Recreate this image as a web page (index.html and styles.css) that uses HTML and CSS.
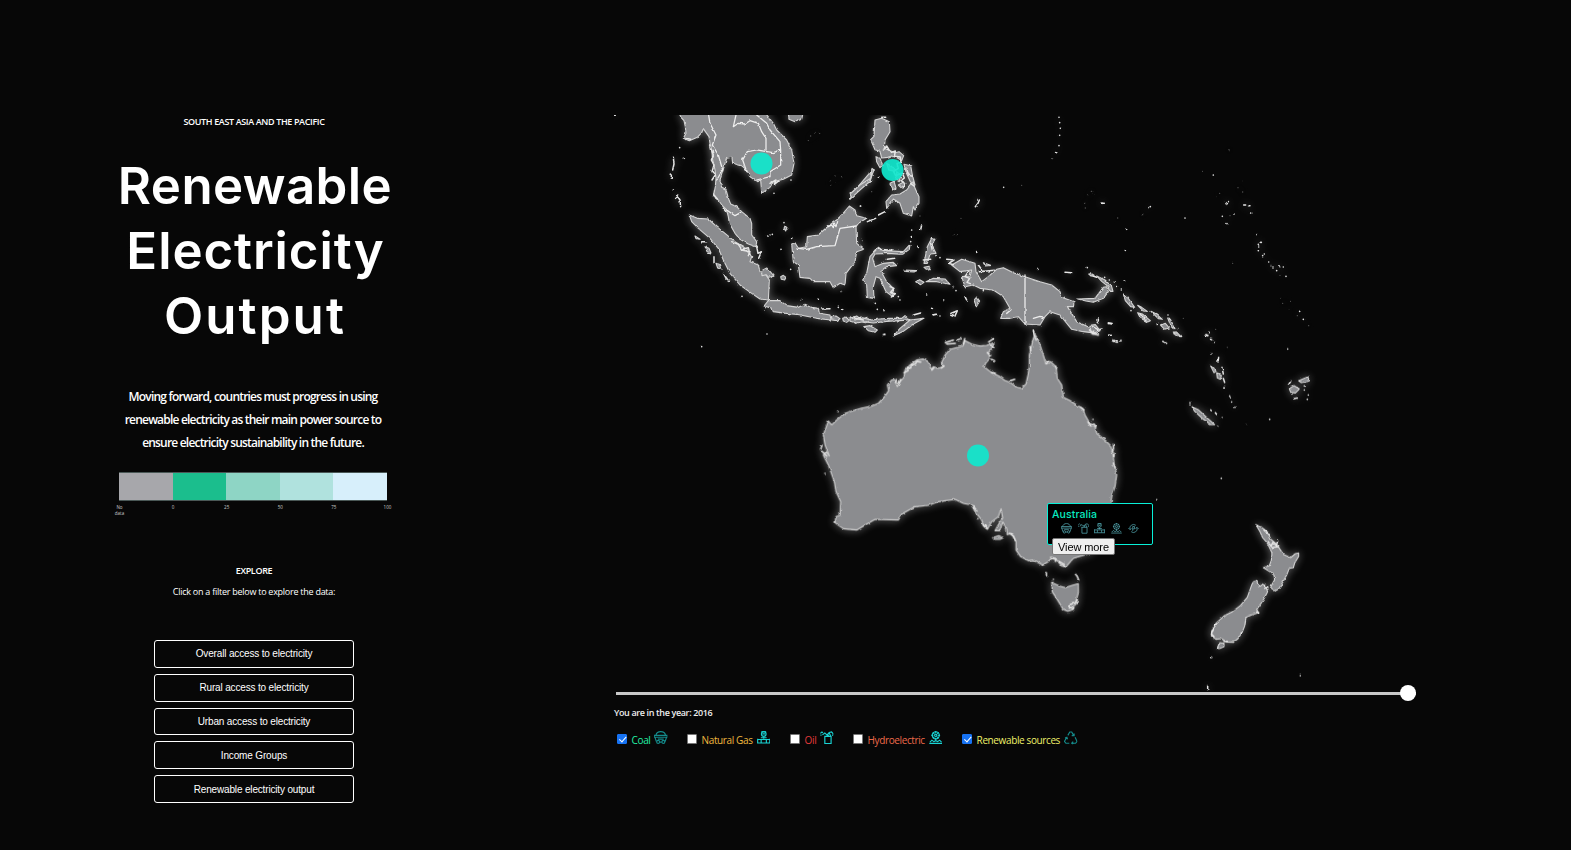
FILE: index.html
```html
<!DOCTYPE html>
<html lang="en">
<head>
<meta charset="utf-8">
<title>Renewable Electricity Output</title>
<link rel="stylesheet" href="styles.css">
</head>
<body>
<svg class="defs" aria-hidden="true">
  <symbol id="coal" viewBox="0 0 14 14"><path d="M2 4.500C2.500 2 4.500.7 7 .7s4.500 1.300 5 3.800M.3 4.500h13.400v2H.3zM1 6.500l1.500 4.500M13 6.500 11.500 11M4 8.500h6M6 11.500h2"/><circle cx="4.300" cy="11.300" r="1.500"/><circle cx="9.700" cy="11.300" r="1.500"/></symbol>
  <symbol id="gas" viewBox="0 0 14 14"><circle cx="7" cy="3" r="2.400"/><path d="M4.500.8h5M5.500 3h3M7 5.500V8M4 7h6M.7 8v5M13.300 8v5M.7 8.800h3.600v3.600H.7M13.300 8.800H9.700v3.600h3.600M4.300 8.800h5.400M4.300 12.400h5.400"/></symbol>
  <symbol id="oil" viewBox="0 0 14 14"><path d="M.3 2.500 2 1l1 1M2.500 4 5 2l2.500 2.500 2-3 2.500-.5 1.700 2-.7 2M4.500 5.500h7M5 5v8h6.500V5M7 3l2 2M9.500 2l1.500 3M1 3.500v1.500"/></symbol>
  <symbol id="hydro" viewBox="0 0 14 14"><circle cx="7" cy="4.500" r="3.700"/><circle cx="7" cy="4.500" r="1.200"/><path d="M7 0v2m0 5v3M2.500 4.500h2m5 0h2M4 1.500l1.500 1.500m3 3L10 7.500M10 1.500 8.500 3M5.500 6 4 7.500M1 11.500l2-2 2 1.500 2-1 2 1 2-1.500 2 2M.3 12.800h13.400"/></symbol>
  <symbol id="recycle" viewBox="0 0 14 14"><path d="M4 4.500 6 1h2l2 3.500M10.500 2.500v2.300H8M11.500 6.500l2 4.200-1.500 2H8m1.500-1.700L8 12.700l1.500 1M5.500 12.700H2L.5 10.700l2.300-4M1 7.200l2-.7.700 2"/></symbol>
  <symbol id="power" viewBox="0 0 14 14"><path d="M2.500 8A4.700 4.700 0 0 1 10 3M11.500 6A4.700 4.700 0 0 1 4 11M.5 6.500 2.500 8.500l2-1.500M9.500 7l2-1.500 2 2M6 10V4.500h2.300v3H6"/></symbol>
</svg>

<main class="page">
  <section class="intro">
    <p class="region">SOUTH EAST ASIA AND THE PACIFIC</p>
    <h1 class="title"><span class="line-a">Renewable</span><span class="line-b">Electricity</span><span class="line-c">Output</span></h1>
    <p class="lead">Moving forward, countries must progress in using<br>renewable electricity as their main power source to<br>ensure electricity sustainability in the future.</p>
    <div class="scale"><i class="s0"></i><i class="s1"></i><i class="s2"></i><i class="s3"></i><i class="s4"></i></div>
    <div class="ticks"><span>No<br>data</span><span>0</span><span>25</span><span>50</span><span>75</span><span>100</span></div>
    <h2 class="explore">EXPLORE</h2>
    <p class="hint">Click on a filter below to explore the data:</p>
    <nav class="filters">
      <button>Overall access to electricity</button>
      <button>Rural access to electricity</button>
      <button>Urban access to electricity</button>
      <button>Income Groups</button>
      <button>Renewable electricity output</button>
    </nav>
  </section>

  <section class="viz">
    <div class="map">
      <svg class="map-svg" viewBox="614 115 803 576">
        <defs>
          <filter id="coast" filterUnits="userSpaceOnUse" x="600" y="100" width="830" height="600" color-interpolation-filters="sRGB">
            <feTurbulence type="fractalNoise" baseFrequency=".25" numOctaves="1" seed="4" result="n"/>
            <feDisplacementMap in="SourceGraphic" in2="n" scale="3" xChannelSelector="R" yChannelSelector="G" result="d"/>
            <feGaussianBlur in="d" stdDeviation="4" result="b"/>
            <feComponentTransfer in="b" result="g"><feFuncA type="linear" slope=".6"/></feComponentTransfer>
            <feMerge><feMergeNode in="g"/><feMergeNode in="d"/></feMerge>
          </filter>
        </defs>
        <g class="land" filter="url(#coast)">
          <!-- mainland and western islands -->
          <g transform="translate(610 100) scale(.33333)">
            <path d="M207 40l6 12 9 10 4 18 2 20-8 15 18 7 24-10 13-14 5-12 10 14 7 10 3 20 5 20 3 30 7 30 3 25-2 25-6 30 15 10 13 18 12 12 5 20 3 20 17 30 15 18 25 14 23 8 2-15-15-20v-35l-5-15-25-20-15-15-18-8-7-17-7-27-13-6-5-22 8-25 7-25 5-15 16-3 2 18 27 7 15 13 10 20 20 15 12-5 3 40 25-18 10-17 30-7 25-13 7-35-7-40-15-30-30-30-10-20-25-32Z"/>
            <path class="border" d="M295 40l5 30 18 35-11 30 18 30 13 45-18 30M378 45l-8 35 15-10 20 2 15-10 25 8 10 25 13 20v35M440 45l30 25 10 20 30 35 2 25M410 215l-12-35 14-25 28-5 30 5 20 3 22-8v45l-32 20v15l-40 10M350 330l25 17 17-9"/>
            <path d="M535 40l2 18 18 7 20-7 4-18Z"/>
            <path d="M238 345l24 10 33 2 25 23 25 20 30 25 25 15 25 30-5 15 25 10 5 20 15 5 13 20-3 60-25-3-25-17-35-25-30-35-20-40-15-35-25-30-35-30-20-20Z"/>
            <path d="M475 602h35l20 15 35 5 20-9 20 9 20 3 3 15 32 5 3 15-43-5-60-12-30-3-40-5-5-10-23-7Z"/>
            <path d="M664 650l14-2 12 8-10 6-14-2ZM698 655l10-4 10 10-8 6-10-4ZM724 654l16-6 14 10 18-6 10 8-16 8-14-4-16 6ZM762 680h18v6l-12-2Z"/>
            <path d="M545 432l10-4 10 17 25-5 2-30 33-5 30-27 25-18 15-15 23-27 17 12 5 17 30 8-25 15-7 10 2 50 22 18-22 7-5 30-27 35-3 35-15-5-20 13-10-18h-50l-10-10-30-3-5-37-15-10Z"/>
            <path class="border" d="M565 445l25 3 30-8 55-3 15-52 48-7M655 380l10-5 5 8 3-13 5 10 5-15"/>
            <path d="M720 298l7-18 51-60 8 5-6 20-40 30Z"/>
            <path d="M455 512l15-8 10 10 12 14-16 4-8-8-12 3ZM512 530l8-4 8 6-4 8-10-2ZM318 490l10 3 5 15-10-4ZM285 440l12 5 6 14-12-4ZM255 408l15 10-12-2ZM340 520l16 22-8-6ZM525 378l6 5-4 10-5-8Z"/>
            <path class="bold" d="M190 172l2 20-4 18M184 225v10M200 285l10 15 2 20M228 115l14 3M305 150l5 15-6 15 8 15-6 20 10 10-10 15M312 285l10 12M480 250l18-10-6 14 12-10M365 425l20 8 10 15 20-5 5 20M395 450l25 5-5 12M440 440l4 20 10-5-8 20M275 425h15M312 470v15M340 325l8 10M635 627l25-1M12 46h4"/>
            <path class="dots" d="M209 143h0M223 175h0M190 270h0M204 290h0M197 295h0M465 630h0M396 589h0M471 702h0M275 740h0M480 405h0M473 408h0M487 403h0M522 368h0M545 415h0M513 448h0M492 280h0M543 240h0M542 508h0M575 599h0M625 598h0M694 575h0M685 622h0M695 628h0M752 318h0"/>
            <path class="faint" d="M615 97h0M626 100h0M602 108h0M595 122h0M675 228h0M660 242h0M695 233h0M662 255h0M678 245h0"/>
          </g>
          <!-- Philippines, Sulawesi, New Guinea -->
          <g transform="translate(850 100) scale(.33333)">
            <path d="M75 60l20-5 23 10 2 30-15 25-2 25 12 5 20 8 12-3 14 12-6 15-12-8-18-6-12 4-18 2-5-20-15-5-13-30 10-10Z"/>
            <path d="M78 170l12 5 8 20-8 8-10-18ZM162 193l20 4 5 28 8 30-14-10-12-26ZM110 190l16 10 6 14-16-4ZM120 250l12-6 6 20-8 6ZM140 215l12 10-4 20-10-6ZM145 255l14-8 6 6-12 10Z"/>
            <path d="M110 325l-2-20 17-20 25-3 20-12 20-25 5 20 12 25v20l-12 20-5-10-5 28-25-8-10-30-20-13Z"/>
            <path d="M0 282l30-27 32-20 4-30 6 5-14 35-53 48Z"/>
            <path d="M60 470l25-28 15 10 60 3 20-22-2 15-20 15-43-3-40 2-7 13 7 25 25-10 30-3 10 10-30 3-18 12 18 33 20 20-2 25-20-15-18-40-12-5-8 30 2 35-20-3-2-37-12-15 12-20Z"/>
            <path d="M232 440l13-25 10 3-10 17 13 25-18 2-8 28h-10ZM228 545l22-10 35 2 15 16-40-8ZM197 545l12-6 13 8-10 7ZM222 502l15-3 4 7-12 2ZM162 510l38 2-8 4-28-2ZM372 600l8-9 9 12-10 17Z"/>
            <path d="M305 495l30-17 40 12 3 25 17 30 20-15 25-22 20-5 30 15 35 12 45 15 35 10 25 20 5 17 37 13-2 15h-18l28 45 45 20 17 15-42-5-35-7-35-43-30-10-15 15-15 25-45-3-20-22-25 5h-28l8-20 20-10-20-35-30-20-40-5-20-10-25 5-10-30 25-2 5-18-35 5Z"/>
            <path class="border" d="M525 525v147M550 655l20-6 10 4"/>
            <path d="M683 597l52-2 25-33 10-2 5 15-15 20-30 12-22-4ZM400 488l22 8-16 2Z"/>
            <path d="M130 708l20-23 30-25 42-5-32 17-30 22ZM42 680l18-3 22 13-7 7-20-5ZM0 650l15 10 20-7 30 7 25-3 25-2 40 0 10-8 15 12-20 2-50 3-40 5-30-4-20 4-20-5Z"/>
            <path class="bold" d="M85 448l40 3M95 52h12M100 150l10-12 12 20 14-5-3 16 18 2 2 15-12 5 4 14-14 10 6 12 20-8 6 15-10 8 14 8-8 14M170 205l5 20 12 4M182 250l10 8M120 560l12 5-10 12 14 4-12 10M52 365l25-10M85 345l20-10M112 478l22-3M215 375l-3 14M385 495l15 20M388 515l45-4M290 478l22 2-16 10 14 4M355 515l-10 15 14 5-8 12 10 4M388 300l-4 10-8 10M645 517l20 1M345 590l5 10M302 640l20-8-8 18-12-4M250 645l10-2M470 640l12-10M15 655l25 5M220 480l22-2M720 525l20 7M725 680l18 6-4 12M742 690l14-3M550 690l4 25M242 430l5 20M190 645l22-6"/>
            <path class="dots" d="M627 52h0M629 68h0M631 85h0M629 106h0M627 137h0M617 158h0M607 175h0M461 262h0M88 232h0M72 210h0M31 318h0M185 390h0M184 410h0M182 425h0M205 442h0M270 473h0M258 467h0M230 585h0M281 600h0M245 625h0M310 560h0M318 572h0M345 560h0M270 648h0M76 610h0M82 628h0M102 632h0M150 600h0M145 590h0M103 703h0M564 508h0M712 503h0M757 310h0M740 660h0M745 668h0M400 572h0M776 670h0M430 717h0M380 455h0M35 422h0"/>
            <path class="faint" d="M515 256h0M333 355h0M310 405h0M322 406h0M725 274h0M714 284h0M704 310h0M706 324h0M731 283h0M65 275h0M210 348h0"/>
          </g>
          <!-- Micronesia and the Solomon Islands -->
          <g transform="translate(1090 100) scale(.33333)">
            <path d="M100 582l14 12 20 28-12-2-16-18ZM143 616l12 6 17 12-12-1ZM183 634l16 8 18 16-12-2ZM143 638l14 4 24 20-8 4-22-12ZM212 676l14-6 12 14-14 4ZM233 654l8 4 14 28-12-6ZM250 696l10 0 12 14-10-2ZM0 676l16-2 14 18-20 8-12-10ZM0 518l12 8-10 2ZM20 528l25 12 20 20 4 14-8 0-8-16-18-14Z"/>
            <path class="bold" d="M150 642l18 18M55 669l12 3M461 315l6 0M475 317h5M346 706l6 1M25 657v6M36 310h7M56 706h8M102 543h2M8 680l15 8"/>
            <path class="dots" d="M181 320h0M177 323h0M285 354h0M370 225h0M408 308h0M412 311h0M416 305h0M432 342h0M411 371h0M397 349h0M482 339h0M501 404h0M505 433h0M511 427h0M506 441h0M505 452h0M523 462h0M518 467h0M536 486h0M543 497h0M549 504h0M560 512h0M570 500h0M580 501h0M588 529h0M44 532h0M58 540h0M73 546h0M82 560h0M94 570h0M123 632h0M234 645h0M202 671h0M263 685h0M107 388h0M106 451h0M629 634h0M640 658h0M70 718h0M357 697h0M362 718h0"/>
            <path class="faint" d="M417 149h0M337 214h0M458 244h0M444 263h0M458 276h0M389 280h0M382 290h0M83 354h0M158 344h0M428 490h0M573 595h0M578 610h0M599 604h0M596 628h0M622 647h0M656 677h0M280 655h0M377 688h0M570 526h0M4 274h0M10 283h0M420 347h0"/>
          </g>
          <!-- Australia and Tasmania -->
          <g transform="translate(800 320) scale(.33333)">
            <path d="M85 303L95 315 110 300 135 280 160 272 185 264 215 258 235 250 252 232 266 212 262 195 275 180 283 178 292 200 300 185 312 172 315 150 330 135 350 120 370 117 385 125 393 148 400 140 415 145 430 140 425 128 435 105 450 88 488 78 495 62 515 72 540 78 560 76 582 68 575 85 565 98 570 115 558 128 552 140 575 158 600 170 615 182 632 188 650 202 665 205 678 192 684 165 688 140 688 105 694 80 700 55 706 45 715 60 725 90 732 112 738 132 752 125 768 140 772 175 785 195 790 232 810 242 830 255 848 265 855 285 868 308 885 320 890 340 912 358 930 375 938 395 942 430 950 465 945 500 936 525 930 560 925 620 900 665 870 700 820 715 800 738 785 738 770 720 755 715 745 725 728 735 700 720 685 722 662 710 648 690 648 665 634 640 622 644 620 625 608 606 600 632 585 632 596 612 608 594 603 566 595 590 575 605 562 628 550 618 545 600 525 575 515 555 490 550 465 538 415 545 385 556 345 560 305 582 295 600 225 598 200 612 170 630 130 626 105 608 108 590 120 586 122 545 108 515 103 485 85 435 70 405 78 395 88 408 75 375 70 345Z"/>
            <path class="bold" d="M66 376l-4 12M66 394l14 14M312 158l12-6-2-10 10 2 2-10 12-2 4-8 12 2M290 178l-2 10M296 192l6-14M395 150l6-6M424 144l8-6M436 68l24-8M440 72l26-2M472 60l10-4M494 56l-4 16M566 66l14-10M574 76l8 8M562 98l10 8M574 118l10 4M574 158l12 2M632 182l12-4M842 262l10 8M864 306l8 12 10-6 6 8M940 372v16l-4 8M942 400v10M940 430l6 14M706 52l2 8M690 80l2 12M738 130l8-6M766 138l4 8M628 640l12 8 6 14M752 712l16 4-2 8M776 724l14 8M792 732v8M520 558l10 14M548 612l14 14"/>
            <path d="M578 653l18-6 14 6-10 5-18 0ZM755 784l6 6 18 8 16 5 24-8 16-4v28l-6 20 2 10-8 8-4 12-16 5-14-6-8-14-12-20-12-18Z"/>
            <path class="bold" d="M739 758v10M826 762l6 8 4 10M832 838l-8 12-12 2-4 12M812 862l8 4M925 10h10M940 62l12 4M875 40l20 5M870 32l16 8-8 2"/>
            <path class="dots" d="M114 275h0M75 460h0M533 596h0M701 35h0M705 42h0M879 298h0M760 778h0M255 43h0M250 44h0M930 46h0M963 62h0"/>
          </g>
          <!-- New Zealand, Vanuatu, New Caledonia, Fiji -->
          <g transform="translate(1110 330) scale(.33333)">
            <path d="M438 585l16 6 20 16 8 20 16 14 10 14 12 18 22 10 14-12 10-2 0 10-12 20-4 14-12 2-8 20-12 22-12 20-10 6-14-10 4-10 8-14-2-14-12-10-20-12 18-6 6-16 2-22-14-30-14-16-8-18Z"/>
            <path d="M425 765L430 756 440 752 446 770 456 762 466 768 473 785 462 806 452 822 440 838 446 848 425 855 408 862 404 888 396 908 384 926 370 937 350 936 334 926 318 928 304 918 306 902 318 880 342 858 366 846 392 826 412 802Z"/>
            <path d="M322 957l8-19 12 2 0 10-12 5Z"/>
            <path d="M246 230l20 10 26 24 22 20-12 0-24-18-24-22ZM190 10l8-2 14 10-8 2ZM302 108l8 4 8 12-6 4ZM320 128l14 8-2 12-10-4ZM538 176l14-9 16 10-12 12-14-2ZM566 152l20-8 12-4-4 14-20 4Z"/>
            <path class="bold" d="M462 600l16 14M475 635l8 14 6-12 10 10 4-14M486 652l20-2M305 908l6-16 8-10M462 765l12 6-10 4M304 912l8 8M440 846l6 2M342 934h10M336 112l4 20M340 145l4 12M326 82l-2 14M293 1068v10M552 206l10-2M535 165l8-12M158 34l12 6M288 14l6 2M12 32l10 4M302 240l2 2M334 262h2M316 248l4 5M341 174h4M438 585l4 2M394 908v4"/>
            <path class="dots" d="M240 221h0M323 289h0M359 198h0M361 203h0M365 216h0M375 232h0M303 72h0M311 38h0M305 29h0M297 8h0M533 57h0M479 268h0M334 445h0M140 509h0M305 982h0M571 1037h0M592 208h0M595 195h0M583 180h0M546 192h0M583 168h0M32 32h0"/>
            <path class="faint" d="M352 52h0M408 283h0"/>
          </g>
        </g>
        <g class="markers"><circle cx="761.500" cy="163.500" r="11"/><circle cx="892.500" cy="170" r="11"/><circle cx="978" cy="455.500" r="11"/></g>
      </svg>
      <aside class="tip">
        <strong>Australia</strong>
        <div class="tip-icons"><svg><use href="#coal"/></svg><svg><use href="#oil"/></svg><svg><use href="#gas"/></svg><svg><use href="#hydro"/></svg><svg><use href="#power"/></svg></div>
        <button>View more</button>
      </aside>
    </div>
    <div class="slider"><span class="thumb"></span></div>
    <p class="year">You are in the year: 2016</p>
    <div class="sources">
      <label class="coal"><i class="box on"></i><span>Coal</span><svg class="dim"><use href="#coal"/></svg></label>
      <label class="gas"><i class="box"></i><span>Natural Gas</span><svg><use href="#gas"/></svg></label>
      <label class="oil"><i class="box"></i><span>Oil</span><svg><use href="#oil"/></svg></label>
      <label class="hydro"><i class="box"></i><span>Hydroelectric</span><svg><use href="#hydro"/></svg></label>
      <label class="renew"><i class="box on"></i><span>Renewable sources</span><svg class="dim"><use href="#recycle"/></svg></label>
    </div>
  </section>
</main>
</body>
</html>
```
FILE: styles.css
```css
* { box-sizing: border-box; }
body { margin: 0; background: #070707; color: #fff; font-family: "Open Sans", sans-serif; height: 850px; overflow: hidden; }
p, h1, h2 { margin: 0; }
.defs { display: none; }
.page { display: flex; height: 850px; padding: 115px 0 0 104px; }
.intro { width: 300px; margin-right: 210px; display: flex; flex-direction: column; align-items: center; text-align: center; }
.region { font-size: 9px; line-height: 14px; font-weight: 600; letter-spacing: -.37px; white-space: nowrap; }
.title { margin-top: 24px; font-family: Inter, sans-serif; font-weight: 600; font-size: 51px; line-height: 65px; white-space: nowrap; }
.title span { display: block; }
.line-a { letter-spacing: .4px; padding-left: 2px; }
.line-b { letter-spacing: .9px; padding-left: 3px; }
.line-c { letter-spacing: 2.100px; padding-left: 2px; }
.lead { margin-top: 37px; margin-left: -2px; font-size: 12px; line-height: 23px; font-weight: 600; letter-spacing: -.8px; white-space: nowrap; }
.scale { display: flex; width: 268px; height: 29px; margin: 18px 0 0 -2px; border: 1px solid #4a5856; border-width: 1px 0; }
.scale i { flex: 1; }
.s0 { background: #a7a7ab; }
.s1 { background: #1bbe8d; }
.s2 { background: #8ed5c5; }
.s3 { background: #b0e2de; }
.s4 { background: #d7effb; }
.ticks { display: flex; justify-content: space-between; width: 279px; height: 16px; padding-top: 3px; margin-left: -1px; font-size: 4.500px; line-height: 6px; color: #ccc; }
.ticks span { width: 11px; }
.explore { margin-top: 47px; font-size: 9px; line-height: 14px; font-weight: 600; letter-spacing: -.35px; }
.hint { margin-top: 7px; font-size: 9px; line-height: 14px; letter-spacing: -.26px; white-space: nowrap; }
.filters { margin-top: 41px; display: flex; flex-direction: column; gap: 6px; }
.filters button { width: 200px; height: 27.800px; padding: 0; background: transparent; border: 1px solid #fff; border-radius: 3px; color: #fff; font: 10px "Liberation Sans", sans-serif; letter-spacing: -.16px; }

.viz { width: 803px; }
.map { position: relative; height: 576px; }
.map-svg { display: block; width: 803px; height: 576px; }
.land path { fill: #8b8c8f; stroke: #d4d4d4; stroke-width: 3.300; stroke-linejoin: round; stroke-linecap: round; }
.land path.border { fill: none; stroke: #eee; stroke-width: 3.800; }
.land path.bold { fill: none; stroke: #e6e6e6; stroke-width: 4.500; }
.land path.dots { fill: none; stroke: #ddd; stroke-width: 5; }
.land path.faint { fill: none; stroke: #555; stroke-width: 4; }
.markers circle { fill: #10e7cd; fill-opacity: .92; }

.tip { position: absolute; left: 433px; top: 388px; width: 106px; height: 42px; padding: 4px 4px 0; background: #000; border: 1px solid #08f0d8; border-radius: 2px; }
.tip strong { display: block; font: 500 10.500px/14px Inter, sans-serif; letter-spacing: .1px; color: #08ecc0; }
.tip-icons { display: flex; gap: 5.700px; margin: 1px 0 0 9px; }
.tip-icons svg { width: 11px; height: 11px; stroke: #4f9fa8; }
.tip button { display: block; margin-top: 4px; width: 63px; height: 17px; padding: 0; background: #efefef; border: 1px solid #767676; border-radius: 2px; color: #000; font: 11px "Liberation Sans", sans-serif; letter-spacing: -.1px; }

svg { fill: none; stroke-width: 1; flex: none; }
.slider { position: relative; height: 3px; margin: 1px 0 0 2px; width: 800px; background: #c8c8c8; }
.thumb { position: absolute; right: 0; top: -7px; width: 16px; height: 16px; border-radius: 50%; background: #fff; }
.year { margin-top: 11px; font-size: 9px; line-height: 14px; font-weight: 600; letter-spacing: -.36px; color: #eee; }
.sources { display: flex; margin: 11px 0 0 3px; font-size: 10px; letter-spacing: -.38px; }
.sources label { display: flex; height: 16px; }
.sources span { margin: 2px 4px 0 4.600px; line-height: 14px; white-space: nowrap; }
.sources svg { width: 13.500px; height: 13.500px; stroke: #19d3d3; stroke-width: 1.200; }
.sources svg.dim { stroke: #148b8b; }
.coal { width: 70px; color: #22f0a5; }
.gas { width: 103px; color: #f0b93f; }
.oil { width: 63px; color: #e33a3a; }
.hydro { width: 109px; color: #ee6a4a; }
.renew { color: #eef06a; }
.box { position: relative; width: 10px; height: 10px; margin-top: 3px; background: #fff; border: 1px solid #767676; border-radius: 1px; flex: none; }
.box.on { background: #1672f3; border-color: #1672f3; }
.box.on::after { content: ""; position: absolute; left: 2.500px; top: 0; width: 3px; height: 5.500px; border: solid #fff; border-width: 0 1.400px 1.400px 0; transform: rotate(42deg); }
```
